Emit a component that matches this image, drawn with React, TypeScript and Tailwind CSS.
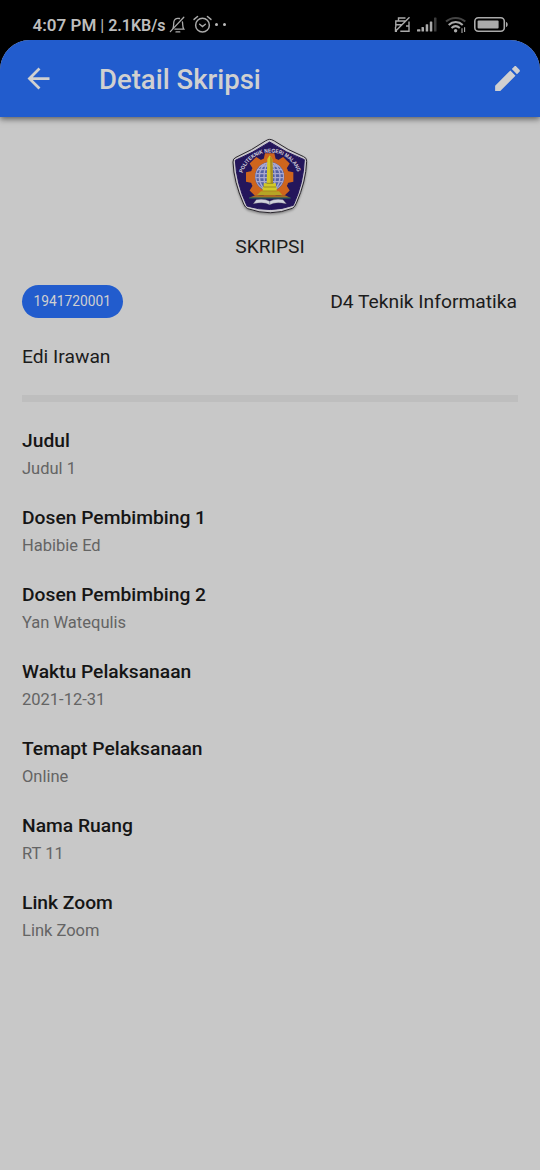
const details = [
  { label: "Judul", value: "Judul 1" },
  { label: "Dosen Pembimbing 1", value: "Habibie Ed" },
  { label: "Dosen Pembimbing 2", value: "Yan Watequlis" },
  { label: "Waktu Pelaksanaan", value: "2021-12-31" },
  { label: "Temapt Pelaksanaan", value: "Online" },
  { label: "Nama Ruang", value: "RT 11" },
  { label: "Link Zoom", value: "Link Zoom" },
];

function StatusBar() {
  return (
    <div className="flex h-10 items-center pt-[9px] pl-[32.5px] pr-[32px] text-[#bdbdbd]">
      <span className="w-[134px] pt-[2px] whitespace-nowrap text-[16px] leading-8 font-semibold">
        <span className="text-[17px]">4:07 PM</span> <span className="font-normal">|</span> 2.1KB/s
      </span>
      <svg className="ml-[2.5px] h-[18px] w-[18px]" viewBox="0 0 18 18" fill="none" stroke="#aaa" strokeWidth="1.3" strokeLinecap="round">
        <path d="M3.6 13.2 C5 11.5 4.4 8 4.9 5.7 C5.5 2.8 8 2 10.5 2.5 M13.4 5.8 C14 8.5 13.3 11 14.8 13.2 H6 M7 15.9 H10.8 M1.3 15.6 L14.8 1.3" />
      </svg>
      <svg className="ml-[6px] h-[19px] w-[19px]" viewBox="0 0 18 18" fill="none" stroke="#aaa" strokeWidth="1.4" strokeLinecap="round">
        <circle cx="9" cy="9.6" r="6.5" />
        <path d="M1 4.2 L4.3 1.4 M17 4.2 L13.7 1.4 M6.3 8.8 L9 10.9 L11.7 8.8" />
      </svg>
      <span className="ml-[3px] flex gap-[5px]">
        <i className="size-[3px] rounded-full bg-[#bbb]" />
        <i className="size-[3px] rounded-full bg-[#bbb]" />
      </span>
      <svg className="ml-auto h-[17px] w-[17px]" viewBox="0 0 17 17" fill="none" stroke="#aaa" strokeWidth="1.4">
        <path d="M4.5 5 V2 H11.5 M1.8 11 V5 H12 M1.3 8.8 H8 M1.5 11 V15.3 H3 M6.3 15.3 H15 V5.5 M12 10 H15 M1.2 15.5 L15.5 1.2" />
      </svg>
      <svg className="ml-[6px] h-[17px] w-[21px]" viewBox="0 0 21 17" fill="#aaa">
        <rect x="0" y="13.2" width="3.4" height="2.3" rx=".6" />
        <rect x="4.5" y="11" width="2.5" height="4.5" rx=".6" />
        <rect x="8.7" y="8.2" width="2.5" height="7.3" rx=".6" />
        <rect x="12.8" y="5.5" width="2.5" height="10" rx=".6" />
        <rect x="17" y="1.5" width="2.5" height="14" rx=".6" fill="#3c3c3c" />
      </svg>
      <svg className="ml-[7px] h-[18px] w-[22px]" viewBox="0 0 22 18" fill="none" stroke="#aaa" strokeWidth="2">
        <path d="M1 5.6 C6.5 .7 14.8 .7 20.3 5.6" stroke="#444" />
        <path d="M3.7 8.9 C7.7 5.1 13.7 5.1 17.7 8.9 M6.5 12 C9 9.7 12.3 9.7 14.8 12" />
        <circle cx="10.6" cy="14.7" r="1.7" fill="#aaa" stroke="none" />
        <path d="M17 12.3 V17 M19.6 11.3 V16" strokeWidth="1.1" />
      </svg>
      <svg className="ml-[7px] h-[17px] w-[34px]" viewBox="0 0 34 17">
        <rect x=".8" y="1.8" width="29.5" height="13.4" rx="3.5" fill="none" stroke="#aaa" strokeWidth="1.6" />
        <rect x="3.6" y="4.5" width="21" height="8" rx="1" fill="#aaa" />
        <path d="M32 6 C34.3 6.5 34.3 10.5 32 11 Z" fill="#aaa" />
      </svg>
    </div>
  );
}

function Logo() {
  return (
    <svg className="block h-[90px] w-[90px]" viewBox="0 0 270 270" aria-label="Politeknik Negeri Malang">
      <defs>
        <path id="crest-arc" d="M53 129 A86 86 0 0 1 218 129 L225 155" />
        <clipPath id="globe-clip"><circle cx="134" cy="140" r="43" /></clipPath>
        <filter id="crest-shadow" x="-10%" y="-10%" width="120%" height="125%">
          <feDropShadow dx="0" dy="4" stdDeviation="3" floodOpacity=".35" />
        </filter>
      </defs>
      <path filter="url(#crest-shadow)" d="M134 28 Q140 28 148 33 Q187 60 236 80 Q246 84 245 94 Q243 155 214 220 Q209 232 202 235 Q137 261 68 236 Q61 233 56 222 Q26 155 24 96 Q23 86 33 82 Q82 60 121 33 Q129 28 134 28 Z" fill="#c9c7cc" stroke="#29262c" strokeWidth="3" />
      <path d="M134 36 Q184 69 238 89 Q236 158 205 226 Q137 250 66 228 Q34 160 31 91 Q82 70 134 36 Z" fill="#24165b" stroke="#24165b" strokeWidth="3" strokeLinejoin="round" />
      <g fill="#ce651d">
        <circle cx="134" cy="141" r="58" />
        {[0, 45, 90, 135, 180, 225, 270, 315].map((a) => (
          <path key={a} d="M116 88 L120 70 H148 L152 88 Z" transform={`rotate(${a} 134 141)`} />
        ))}
      </g>
      <circle cx="134" cy="140" r="44" fill="#5362a6" />
      <g clipPath="url(#globe-clip)" fill="none" stroke="#aaa9d0" strokeWidth="4">
        <circle cx="134" cy="140" r="42" />
        <ellipse cx="134" cy="140" rx="31" ry="42" />
        <ellipse cx="134" cy="140" rx="17" ry="42" />
        <path d="M91 119 H177 M91 131 H177 M91 143 H177 M91 155 H177 M99 108 H169" />
      </g>
      <path d="M73 197 H196 V218 H73 Z" fill="#24165b" />
      <path d="M127 87 L134 76 L142 87 L144 160 H153 V171 H155 V183 H113 V171 H116 V160 H125 Z" fill="#d2c928" />
      <path d="M135 79 L142 87 L144 160 H137 Z" fill="#a88d21" />
      <path d="M113 183 H155 M116 171 H153 M125 160 H144" stroke="#776b22" strokeWidth="2" />
      <path d="M108 184 H162 L172 195 H96 Z" fill="#b5a526" />
      <path d="M72 203 L91 196 H180 L196 203 Z" fill="#a96c24" />
      <path d="M72 204 H197" stroke="#237057" strokeWidth="3" />
      <path d="M94 209 Q119 205 134 214 Q149 205 174 209 L184 221 Q152 214 134 224 Q117 214 85 221 Z" fill="#d0d2dc" stroke="#777" strokeWidth="1" />
      <path d="M134 213 V224" stroke="#69738c" strokeWidth="2" />
      <text fill="#d7d5df" fontFamily="Liberation Sans, sans-serif" fontSize="16.5" fontWeight="700">
        <textPath href="#crest-arc" textLength="218" lengthAdjust="spacingAndGlyphs">POLITEKNIK NEGERI MALANG</textPath>
      </text>
    </svg>
  );
}

export default function App() {
  return (
    <div className="flex h-[1170px] w-[540px] flex-col overflow-hidden bg-black font-['Roboto',sans-serif] text-[#1c1c1c]">
      <StatusBar />
      <div className="flex flex-1 flex-col overflow-hidden rounded-t-[30px] bg-[#c8c8c8]">
        <header className="flex h-[77px] shrink-0 items-center bg-[#225ccd] pr-[16.5px] pl-[22px] text-[#d0d0d0] shadow-[0_2px_6px_rgba(0,0,0,0.55)]">
          <svg className="size-[33px]" viewBox="0 0 24 24" fill="currentColor">
            <path d="M20 11H7.83l5.59-5.59L12 4l-8 8 8 8 1.41-1.41L7.83 13H20v-2z" />
          </svg>
          <h1 className="ml-[44px] pt-[2px] text-[27.5px] leading-[36px] font-medium">Detail Skripsi</h1>
          <svg className="ml-auto size-[33px]" viewBox="0 0 24 24" fill="currentColor">
            <path d="M3 17.25V21h3.75L17.81 9.94l-3.75-3.75L3 17.25zM20.71 7.04c.39-.39.39-1.02 0-1.41l-2.34-2.34c-.39-.39-1.02-.39-1.41 0l-1.83 1.83 3.75 3.75 1.83-1.83z" />
          </svg>
        </header>
        <main className="flex flex-col px-[22px] pt-[13px] text-[19.25px]">
          <div className="flex flex-col items-center">
            <Logo />
            <p className="mt-[13px] leading-7">SKRIPSI</p>
          </div>
          <div className="mt-[24px] flex items-center justify-between">
            <span className="flex h-[33px] w-[100.5px] items-center justify-center rounded-full bg-[#225ccd] text-[13.75px] text-[#d0d0d0]">1941720001</span>
            <span className="pr-px leading-7">D4 Teknik Informatika</span>
          </div>
          <p className="mt-[25px] leading-7">Edi Irawan</p>
          <div className="mt-[24px] h-[7px] bg-[#bebebe]" />
          <dl className="mt-[25px] flex flex-col gap-[20px]">
            {details.map((item) => (
              <div key={item.label}>
                <dt className="leading-7 font-medium text-[#151515]">{item.label}</dt>
                <dd className="pb-[2px] text-[16.5px] leading-[27px] text-[#646464]">{item.value}</dd>
              </div>
            ))}
          </dl>
        </main>
      </div>
    </div>
  );
}
